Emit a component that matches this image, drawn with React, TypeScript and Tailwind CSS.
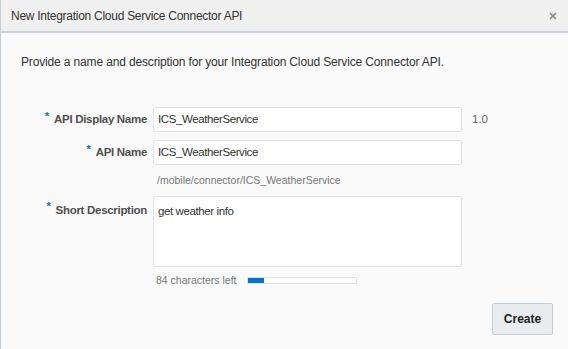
const App = () => {
  const font = { fontFamily: '"Liberation Sans", Arial, sans-serif' };
  return (
    <div className="w-[568px] h-[349px] bg-[#fafafa] border-l border-[#c4ced7] overflow-hidden" style={font}>
      {/* header */}
      <div className="h-[33px] bg-[#f0f0f0] border-b-2 border-[#c9d2da] flex items-center justify-between pl-[10px] pr-[11px]">
        <span className="text-[12px] tracking-[-0.27px] text-[#333]">New Integration Cloud Service Connector API</span>
        <svg width="8" height="8" viewBox="0 0 8 8" className="mt-[1px]">
          <path d="M1 1L7 7M7 1L1 7" stroke="#8a8a8a" strokeWidth="1.6" />
        </svg>
      </div>

      <p className="text-[12px] tracking-[-0.15px] text-[#333] pl-[20px] pt-[20px]">
        Provide a name and description for your Integration Cloud Service Connector API.
      </p>

      <div className="mt-[36px] grid grid-cols-[152px_309px_auto] items-start">
        {/* row 1 */}
        <label className="flex justify-end items-center h-[25px] pr-[6px] text-[11.5px] tracking-[-0.3px] font-bold text-[#4f4f4f]">
          <span className="text-[#0572ce] mr-[5px] -mt-[6px]">*</span>API Display Name
        </label>
        <div className="h-[25px] bg-white border border-[#dfe4e7] rounded-[2px] flex items-center px-[4px] text-[11.5px] tracking-[-0.4px] text-[#333]">ICS_WeatherService</div>
        <div className="h-[25px] flex items-center pl-[10px] text-[11.5px] text-[#666]">1.0</div>

        {/* row 2 */}
        <label className="mt-[8px] flex justify-end items-center h-[25px] pr-[6px] text-[11.5px] tracking-[-0.3px] font-bold text-[#4f4f4f]">
          <span className="text-[#0572ce] mr-[5px] -mt-[6px]">*</span>API Name
        </label>
        <div className="mt-[8px] h-[25px] bg-white border border-[#dfe4e7] rounded-[2px] flex items-center px-[4px] text-[11.5px] tracking-[-0.4px] text-[#333]">ICS_WeatherService</div>
        <div />

        <div />
        <div className="pt-[8px] pl-[4px] text-[10.5px] text-[#777]">/mobile/connector/ICS_WeatherService</div>
        <div />

        {/* row 3 */}
        <label className="mt-[7px] flex justify-end items-start pt-[6px] pr-[6px] text-[11.5px] tracking-[-0.3px] font-bold text-[#4f4f4f]">
          <span className="text-[#0572ce] mr-[5px] -mt-[4px]">*</span>Short Description
        </label>
        <div className="mt-[7px] h-[71px] bg-white border border-[#dfe4e7] rounded-[2px] px-[4px] pt-[6px] text-[11.5px] tracking-[-0.4px] text-[#333]">get weather info</div>
        <div />

        <div />
        <div className="pt-[6px] pl-[3px] flex items-center gap-[10px] text-[10.5px] text-[#777]">
          <span>84 characters left</span>
          <div className="w-[110px] h-[7px] border border-[#dfe4e7] bg-white">
            <div className="w-[16px] h-full bg-[#0572ce]" />
          </div>
        </div>
        <div />
      </div>

      <div className="flex justify-end pr-[15px] mt-[14px]">
        <button className="w-[61px] h-[32px] bg-[#e8ecef] border border-[#c4ced7] rounded-[2px] text-[12px] font-bold text-[#222]">Create</button>
      </div>
    </div>
  );
};

export default App;
